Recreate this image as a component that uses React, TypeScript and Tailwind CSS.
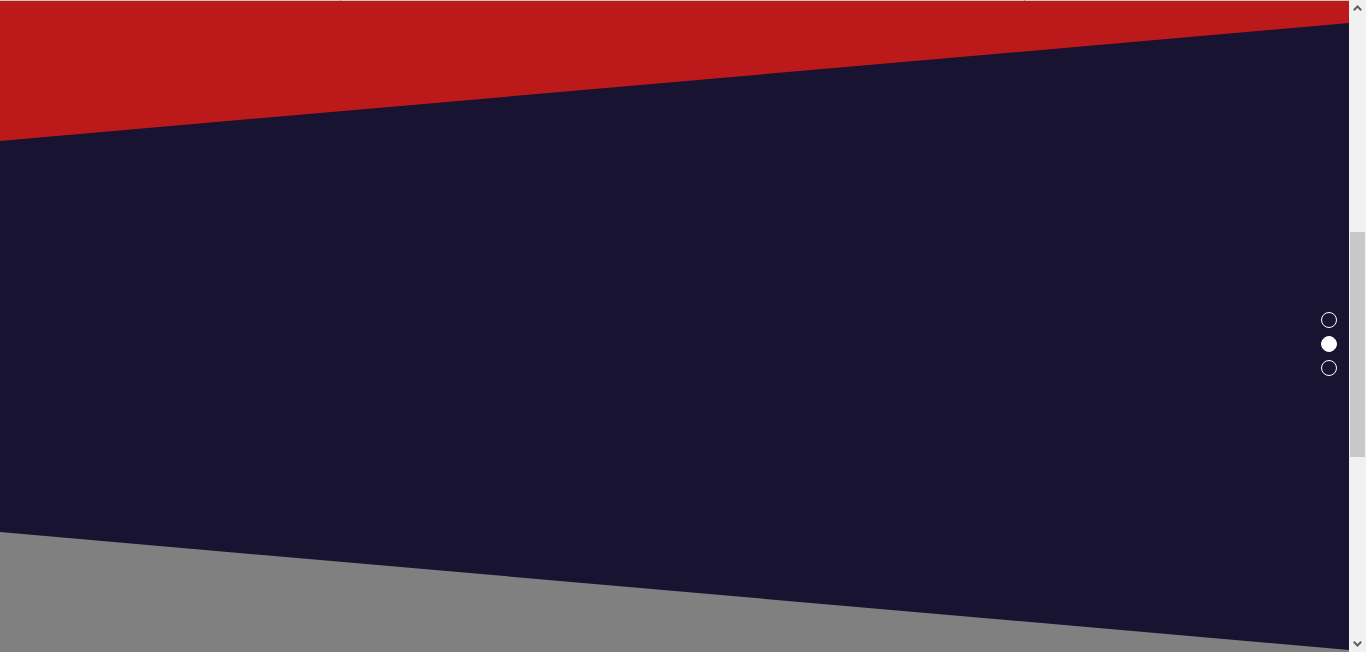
const dots = [false, true, false]

function Chevron({ up }: { up?: boolean }) {
  return (
    <svg width="9" height="6" viewBox="0 0 9 6" className="block">
      <path
        d={up ? "M0.8 5.2 L4.5 1.5 L8.2 5.2" : "M0.8 0.8 L4.5 4.5 L8.2 0.8"}
        fill="none"
        stroke="#5f5f5f"
        strokeWidth="2"
      />
    </svg>
  )
}

function Scrollbar() {
  return (
    <aside className="w-[17px] h-[652px] shrink-0 bg-[#f1f1f1] flex flex-col">
      <div className="h-[17px] flex items-center justify-center pb-[2px]">
        <Chevron up />
      </div>
      <div className="flex-1 px-px">
        <div className="mt-[215px] h-[225px] bg-[#c8c8c8]" />
      </div>
      <div className="h-[17px] flex items-center justify-center pt-[1px]">
        <Chevron />
      </div>
    </aside>
  )
}

export default function App() {
  return (
    <div className="flex w-full h-[652px] overflow-hidden font-['Liberation_Sans',sans-serif]">
      <main className="relative flex-1 flex flex-col h-[652px] overflow-hidden">
        <div className="relative h-px shrink-0 bg-[#c8c8c8]">
          <span className="absolute top-0 left-[340px] w-px h-px bg-[#8f8f8f]" />
          <span className="absolute top-0 left-[1024px] w-px h-px bg-[#8f8f8f]" />
        </div>
        <section className="h-[200px] shrink-0 bg-[#bc191b]" />
        <section className="relative z-10 -mt-[178px] h-[627px] shrink-0 bg-[#181331] [clip-path:polygon(0_118px,100%_0,100%_100%,0_509px)]" />
        <section className="-mt-[118px] h-[140px] shrink-0 bg-[#808080]" />

        <nav className="absolute right-[12px] top-[312px] z-20 flex flex-col gap-[8px]">
          {dots.map((active, i) => (
            <button
              key={i}
              className={
                active
                  ? "w-[16px] h-[16px] rounded-full border border-white bg-white"
                  : "w-[16px] h-[16px] rounded-full border border-white bg-transparent"
              }
            />
          ))}
        </nav>
      </main>
      <Scrollbar />
    </div>
  )
}
